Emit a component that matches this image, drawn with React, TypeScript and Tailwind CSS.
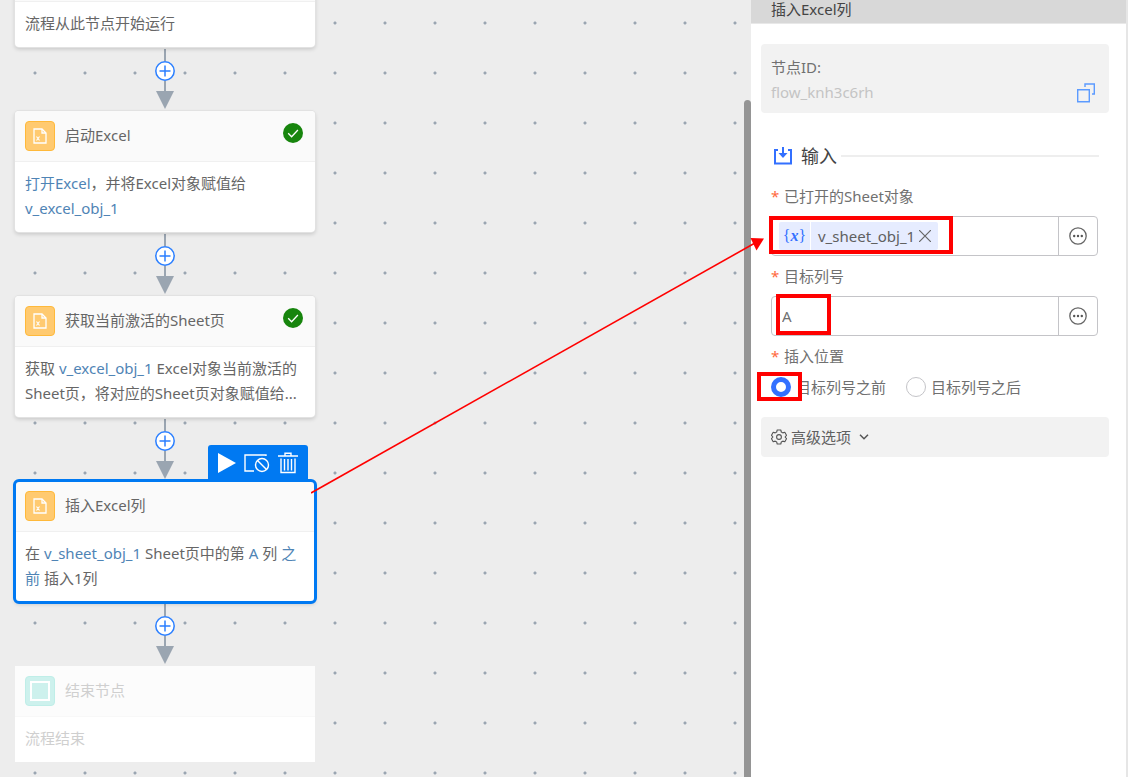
import React, { useState } from 'react';
import { clsx } from 'clsx';

const NODES = [
  {
    id: 'start',
    kind: 'start',
    body: [{ text: '流程从此节点开始运行' }],
  },
  {
    id: 'open',
    title: '启动Excel',
    kind: 'excel',
    done: true,
    body: [{ text: '打开Excel', ref: true }, { text: '，并将Excel对象赋值给 ' }, { text: 'v_excel_obj_1', ref: true }],
  },
  {
    id: 'sheet',
    title: '获取当前激活的Sheet页',
    kind: 'excel',
    done: true,
    body: [
      { text: '获取 ' },
      { text: 'v_excel_obj_1', ref: true },
      { text: ' Excel对象当前激活的Sheet页，将对应的Sheet页对象赋值给...' },
    ],
  },
  {
    id: 'insert',
    title: '插入Excel列',
    kind: 'excel',
    selected: true,
    body: [
      { text: '在 ' },
      { text: 'v_sheet_obj_1', ref: true },
      { text: ' Sheet页中的第 ' },
      { text: 'A', ref: true },
      { text: ' 列 ' },
      { text: '之前', ref: true },
      { text: ' 插入1列' },
    ],
  },
  {
    id: 'end',
    title: '结束节点',
    kind: 'end',
    body: [{ text: '流程结束' }],
  },
];

function NodeIcon({ kind }: { kind: string }) {
  if (kind !== 'excel') {
    return (
      <span className="flex size-[30px] items-center justify-center rounded border border-[#bfeee8] bg-[#cdf1ed]">
        <span className="size-5 border-2 border-white" />
      </span>
    );
  }
  return (
    <span className="flex size-[30px] items-center justify-center rounded border border-[#ffb93a] bg-[#ffca70]">
      <svg width="14" height="16" viewBox="0 0 14 16" fill="none" stroke="#fff">
        <path d="M1 1h8l4 4v10H1z" strokeWidth="1.3" />
        <path d="M9 1v4h4" strokeWidth="1.3" />
        <path d="M3.500 8.500l3 4M6.500 8.500l-3 4" strokeWidth="1.100" />
      </svg>
    </span>
  );
}

function NodeToolbar() {
  return (
    <div className="absolute -top-9 right-[7px] flex h-9 w-[100px] items-center justify-between rounded-t-[3px] bg-[#0079f2] px-2.5 text-white">
      <button aria-label="运行">
        <svg width="18" height="20" viewBox="0 0 18 20" fill="currentColor">
          <path d="M0 0l18 10L0 20z" />
        </svg>
      </button>
      <button aria-label="禁用">
        <svg width="26" height="20" viewBox="0 0 26 20" fill="none" stroke="currentColor" strokeWidth="1.4">
          <path d="M22 3V2H1v16h9" />
          <circle cx="18" cy="12" r="6.5" />
          <path d="M13.5 7.5l9 9" />
        </svg>
      </button>
      <button aria-label="删除">
        <svg width="20" height="22" viewBox="0 0 20 22" fill="none" stroke="currentColor" strokeWidth="1.4">
          <path d="M0 4h20M7 3.5V1.2h6v2.3M3 6.5V20.5h14V6.5" />
          <path d="M6.5 7v11.500M10 7v11.500M13.500 7v11.500" />
        </svg>
      </button>
    </div>
  );
}

function FlowNode({ node }: { node: (typeof NODES)[number] }) {
  const isEnd = node.kind === 'end';
  return (
    <section
      className={clsx(
        'relative w-75 bg-white',
        isEnd ? 'text-[#cfcfcf]' : 'rounded text-[#666] ring-1 ring-[#e2e2e2] shadow-[0_2px_4px_rgba(0,0,0,0.18)]',
        node.selected && 'outline-3 -outline-offset-1 outline-[#0079f2]'
      )}
    >
      {node.selected && <NodeToolbar />}
      <header
        className={clsx(
          'flex h-[51px] items-center gap-2.5 border-b px-2.5',
          isEnd ? 'border-[#f8f8f8] bg-[#fcfcfc]' : 'rounded-t border-[#f0f0f0] bg-[#fafafa]'
        )}
      >
        {node.title && (
          <>
            <NodeIcon kind={node.kind} />
            <h3 className="pb-0.5">{node.title}</h3>
          </>
        )}
        {node.done && (
          <svg className="mr-0.5 mb-[7px] ml-auto" width="20" height="20" viewBox="0 0 20 20" fill="none">
            <circle cx="10" cy="10" r="10" fill="#17850d" />
            <path d="M5.2 10.2l3.4 3.5 6.3-6.7" stroke="#fff" strokeWidth="1.3" />
          </svg>
        )}
      </header>
      <p className="px-2.5 pt-[9px] pb-[11px]">
        {node.body.map((part, i) => (
          <span key={i} className={clsx('ref' in part && 'text-[#4f84b5]')}>
            {part.text}
          </span>
        ))}
      </p>
    </section>
  );
}

function Connector() {
  return (
    <div className="flex h-16 w-75 flex-col items-center pt-0.5">
      <div className="h-3 w-0.5 bg-[#9aa5b1]" />
      <button aria-label="添加节点" className="flex size-5 items-center justify-center rounded-full">
        <svg width="20" height="20" viewBox="0 0 20 20" fill="#fff" stroke="#2b7fff" strokeWidth="1.5">
          <circle cx="10" cy="10" r="9.2" />
          <path d="M10 4.5v11M4.5 10h11" />
        </svg>
      </button>
      <div className="h-2.5 w-0.5 bg-[#9aa5b1]" />
      <svg width="18" height="18" viewBox="0 0 18 18" fill="#9aa5b1">
        <path d="M0 0h18L9 18z" />
      </svg>
    </div>
  );
}

function FieldLabel({ htmlFor, children }: { htmlFor?: string; children: React.ReactNode }) {
  return (
    <label htmlFor={htmlFor} className="flex h-10 items-center gap-[5px]">
      <span className="w-2 text-[#ff6a3d]">*</span>
      {children}
    </label>
  );
}

function MoreButton() {
  return (
    <button
      type="button"
      aria-label="更多"
      className="flex h-full w-[39px] shrink-0 items-center justify-center border-l border-[#c4c4c8]"
    >
      <svg width="18" height="18" viewBox="0 0 18 18" fill="#555">
        <circle cx="9" cy="9" r="8.2" fill="none" stroke="#666" strokeWidth="1.3" />
        <circle cx="5.2" cy="9" r="1.2" />
        <circle cx="9" cy="9" r="1.2" />
        <circle cx="12.8" cy="9" r="1.2" />
      </svg>
    </button>
  );
}

function Properties() {
  const [column, setColumn] = useState('A');
  const [position, setPosition] = useState('before');

  return (
    <aside className="w-[377px] shrink-0 border-r-2 border-[#e6e6e6] bg-white text-[#707070]">
      <h2 className="border-b border-[#e8e8e8] bg-[#d8d8d8] px-5 pb-[5px] leading-[18px] text-[#444]">插入Excel列</h2>

      <div className="pt-5 pr-[17px] pl-2.5">
        <div className="flex items-end justify-between rounded bg-[#f2f2f2] px-2.5 pt-[11px] pb-2">
          <div>
            <p>节点ID:</p>
            <p className="text-[#c4c4c4]">flow_knh3c6rh</p>
          </div>
          <button aria-label="复制" className="mr-1 mb-0.5">
            <svg width="18" height="20" viewBox="0 0 18 20" fill="none" stroke="#5c9bff" strokeWidth="1.4">
              <path d="M.7 6.7h11.6v12H.7z" />
              <path d="M8 4V1h9.3v10H15" />
            </svg>
          </button>
        </div>

        <div className="mt-[27px] flex h-8 items-center px-2.5">
          <svg className="mx-0.5" width="20" height="20" viewBox="0 0 20 20" fill="none" stroke="#3370ff" strokeWidth="2">
            <path d="M5 4H2v13.5h16V4h-3" />
            <path d="M10 1v7" />
            <path d="M5.5 7h9L10 12z" fill="#3370ff" stroke="none" />
          </svg>
          <h3 className="mr-1 ml-1.5 text-lg text-[#444]">输入</h3>
          <div className="h-0.5 flex-1 bg-[#eee]" />
        </div>

        <form className="mt-1 pr-[11px] pl-2.5">
          <FieldLabel htmlFor="sheet">已打开的Sheet对象</FieldLabel>
          <div className="relative flex h-10 items-center rounded border border-[#c4c4c8]">
            <div className="ml-[7px] flex h-7 shrink-0 items-center rounded-xs bg-[#e6ecff]">
              <span className="flex h-full w-8 items-center justify-center border-r border-white font-['Liberation_Serif',serif] text-base text-[#3370ff]">
                {'{'}
                <i className="font-bold">x</i>
                {'}'}
              </span>
              <span className="ml-[7px] text-[#606060]">v_sheet_obj_1</span>
              <button type="button" aria-label="移除" className="mr-[7px] ml-1">
                <svg width="12" height="12" viewBox="0 0 12 12" stroke="#666" strokeWidth="1.2">
                  <path d="M0 0l12 12M12 0L0 12" />
                </svg>
              </button>
            </div>
            <input id="sheet" className="h-full min-w-0 flex-1 px-2 outline-none" />
            <MoreButton />
            <div className="pointer-events-none absolute -top-px -left-[3px] h-[38px] w-46 border-4 border-[#f00]" />
          </div>

          <FieldLabel htmlFor="column">目标列号</FieldLabel>
          <div className="relative flex h-10 items-center rounded border border-[#c4c4c8]">
            <input
              id="column"
              value={column}
              onChange={(e) => setColumn(e.target.value)}
              className="h-full min-w-0 flex-1 px-2.5 outline-none"
            />
            <MoreButton />
            <div className="pointer-events-none absolute -top-[3px] left-1 h-[41px] w-[55px] border-4 border-[#f00]" />
          </div>

          <FieldLabel>插入位置</FieldLabel>
          <div className="relative flex h-[22px] items-center gap-5">
            {[
              { value: 'before', label: '目标列号之前' },
              { value: 'after', label: '目标列号之后' },
            ].map((o) => (
              <label key={o.value} className="flex items-center gap-[5px]">
                <input
                  type="radio"
                  name="position"
                  value={o.value}
                  checked={position === o.value}
                  onChange={() => setPosition(o.value)}
                  className="size-5 appearance-none rounded-full border border-[#c4c4c8] bg-white checked:border-[5px] checked:border-[#3370ff]"
                />
                {o.label}
              </label>
            ))}
            <div className="pointer-events-none absolute -top-1 -left-3.5 h-[29px] w-[45px] border-4 border-[#f00]" />
          </div>
        </form>

        <button className="mt-[19px] flex h-10 w-full items-center rounded bg-[#f2f2f2] px-2.5">
          <svg width="16" height="16" viewBox="0 0 16 16" fill="none" stroke="#555" strokeWidth="1.1" strokeLinejoin="round">
            <path d="M6.200 1h3.600l.5 2 1.500.9 2-.6 1.700 3-1.400 1.700 1.400 1.700-1.700 3-2-.6-1.500.9-.5 2H6.200l-.5-2-1.500-.9-2 .6-1.700-3L1.900 8 .5 6.300l1.700-3 2 .6L5.700 3z" />
            <circle cx="8" cy="8" r="2.4" />
          </svg>
          <span className="mr-2 ml-1 text-[#606060]">高级选项</span>
          <svg width="10" height="6" viewBox="0 0 10 6" fill="none" stroke="#555" strokeWidth="1.5">
            <path d="M1 .8l4 4 4-4" />
          </svg>
        </button>
      </div>
    </aside>
  );
}

export default function App() {
  return (
    <main className="relative flex h-screen overflow-hidden bg-[#ededed] font-['Noto_Sans','Noto_Sans_CJK_SC',sans-serif] text-[15px] leading-[25px]">
      <div className="min-w-0 flex-1 overflow-hidden bg-[radial-gradient(circle,#9aa5b1_1px,transparent_2px)] bg-[length:50px_50px] bg-[position:10px_-2px] pl-[15px]">
        {/* canvas is scrolled down past the start node's header */}
        <div className="-mt-[49px]">
          {NODES.map((node, i) => (
            <React.Fragment key={node.id}>
              {i > 0 && <Connector />}
              <FlowNode node={node} />
            </React.Fragment>
          ))}
        </div>
      </div>
      <div className="w-[7px] shrink-0 pt-25">
        <div className="h-full rounded-t bg-[#959595]" />
      </div>
      <Properties />

      {/* callout arrow from the selected node to its sheet field */}
      <svg
        className="pointer-events-none absolute top-[236px] left-[311px]"
        width="458"
        height="260"
        viewBox="0 0 458 260"
        fill="none"
      >
        <path d="M0 257L444 7" stroke="#f00" strokeWidth="1.6" />
        <path d="M453 2.5L439.500 2l6 12.500z" fill="#f00" />
      </svg>
    </main>
  );
}
